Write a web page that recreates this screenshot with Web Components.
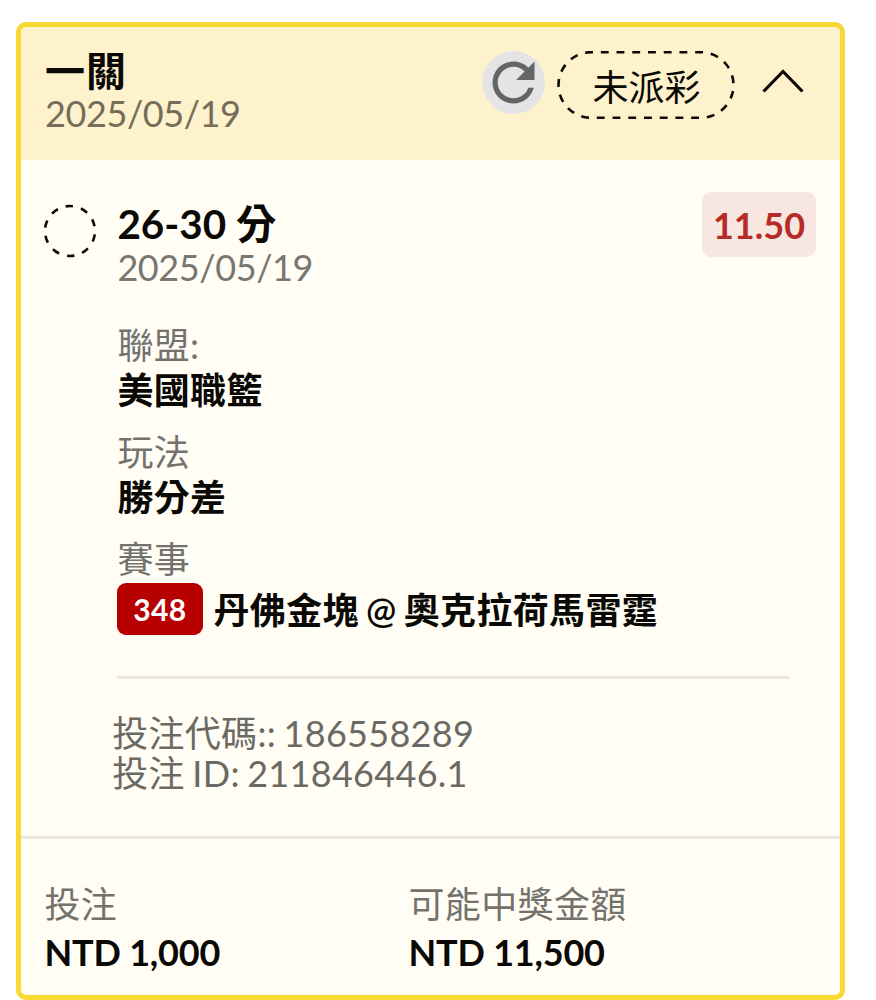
<!DOCTYPE html>
<html lang="zh-Hant">
<head>
<meta charset="utf-8">
<title>一關</title>
<style>
html,body{margin:0;background:#fff}
body{width:876px;height:1000px;overflow:hidden;font:400 36px/44px Lato,"Noto Sans CJK TC",sans-serif;color:#0a0906}
.at{font-weight:600}
</style>
</head>
<body>
<bet-card>
  <bet-header slot="header" heading="一關" date="2025/05/19">
    <refresh-button></refresh-button>
    <status-pill>未派彩</status-pill>
    <chevron-up></chevron-up>
  </bet-header>
  <bet-leg heading="26-30 分" date="2025/05/19">
    <odds-badge slot="odds">11.50</odds-badge>
    <info-pair label="聯盟:">美國職籃</info-pair>
    <info-pair label="玩法">勝分差</info-pair>
    <info-pair label="賽事"><match-row number="348">丹佛金塊 <span class="at">@</span> 奧克拉荷馬雷霆</match-row></info-pair>
    <div slot="codes">投注代碼:: 186558289<br>投注 ID: 211846446.1</div>
  </bet-leg>
  <bet-totals slot="footer">
    <info-pair label="投注">NTD 1,000</info-pair>
    <info-pair label="可能中獎金額">NTD 11,500</info-pair>
  </bet-totals>
</bet-card>
<script>
const define = (name, render) => customElements.define(name, class extends HTMLElement {
  connectedCallback() {
    if (this.shadowRoot) return;
    this.attachShadow({ mode: 'open' }).innerHTML = render(this);
  }
});

define('bet-card', () => `
<style>
:host{display:flex;flex-direction:column;box-sizing:border-box;width:829px;height:978px;margin:22px 0 0 16px;border:5.5px solid #fad834;border-radius:10px;background:#fffdf4;overflow:hidden}
</style>
<slot name="header"></slot><slot></slot><slot name="footer"></slot>`);

define('bet-header', el => `
<style>
:host{display:flex;box-sizing:border-box;height:133px;padding:21px 35px 0 24px;background:#fef2cc}
.text{flex:1}
h1{margin:0;font-size:40px;line-height:46px;font-weight:700;letter-spacing:1px}
.date{line-height:39px;color:#756d59;letter-spacing:-.4px}
.tools{display:flex;align-items:flex-start}
</style>
<div class="text"><h1>${el.getAttribute('heading')}</h1><div class="date">${el.getAttribute('date')}</div></div>
<div class="tools"><slot></slot></div>`);

define('refresh-button', () => `
<style>
:host{display:block;width:63px;height:63px;margin:3px 12px 0 0;border-radius:50%;background:#e4e4e6}
svg{display:block}
</style>
<svg width="63" height="63" viewBox="0 0 24 24"><path fill="#646567" d="M17.65 6.35C16.2 4.9 14.21 4 12 4c-4.42 0-7.99 3.58-7.99 8s3.57 8 7.99 8c3.73 0 6.84-2.55 7.73-6h-2.08c-.82 2.33-3.04 4-5.65 4-3.31 0-6-2.69-6-6s2.69-6 6-6c1.66 0 3.14.69 4.22 1.78L13 11h7V4l-2.35 2.35z"/></svg>`);

define('status-pill', () => `
<style>
:host{display:grid;width:178px;height:68px;margin:3px 27px 0 0}
svg,span{grid-area:1/1}
span{text-align:center;line-height:73px;padding-left:1px}
</style>
<svg width="178" height="68"><rect x="1.5" y="1.2" width="175" height="65.6" rx="32.8" fill="none" stroke="#0a0906" stroke-width="2.6" pathLength="432" stroke-dasharray="8 8" stroke-dashoffset="-9.7"/></svg>
<span><slot></slot></span>`);

define('chevron-up', () => `
<style>:host{display:block;margin-top:21px}svg{display:block}</style>
<svg width="43" height="26"><path d="M1.5 22.5 21 2.5 40.5 22.5" fill="none" stroke="#0a0906" stroke-width="3.2"/></svg>`);

define('bet-leg', el => `
<style>
:host{display:grid;grid-template-columns:96.4px 1fr;height:679px;box-sizing:border-box;padding-top:31px;border-bottom:3px solid #ebe7e1}
.ring{display:block;margin:13px 0 0 22px}
.head{display:flex;justify-content:space-between;padding:11px 24px 0 0}
h2{margin:0;font-size:40.4px;line-height:43px;font-weight:700}
.date{line-height:44px;color:#787671;letter-spacing:-.4px}
.pairs{display:flex;flex-direction:column;gap:19px;margin-top:34px;letter-spacing:.35px}
.codes{margin:37px 50px 0 0;border-top:3px solid #ebe7e1;padding-top:35px;line-height:39.5px;color:#6b6963;letter-spacing:.3px;word-spacing:-2px}
.codes slot{display:block;margin-left:-5.2px}
</style>
<svg class="ring" width="54" height="54"><circle cx="27" cy="27" r="25" fill="none" stroke="#0a0906" stroke-width="2.6" pathLength="160" stroke-dasharray="7.5 8.5" transform="rotate(-100 27 27)"/></svg>
<div>
  <div class="head"><div><h2>${el.getAttribute('heading')}</h2><div class="date">${el.getAttribute('date')}</div></div><slot name="odds"></slot></div>
  <div class="pairs"><slot></slot></div>
  <div class="codes"><slot name="codes"></slot></div>
</div>`);

define('odds-badge', () => `
<style>:host{display:block;width:114px;height:65px;line-height:67px;margin-top:-10px;border-radius:9px;background:#f7e7e0;color:#b62b25;font-weight:700;text-align:center}</style>
<slot></slot>`);

define('info-pair', el => `
<style>
:host{display:block}
.label{line-height:var(--label-line,44px);color:#74726d;letter-spacing:.35px}
.value{line-height:var(--value-line,46px);margin-bottom:var(--value-gap,-2px);font-weight:700}
:host(:last-of-type) .value{margin-bottom:0}
</style>
<div class="label">${el.getAttribute('label')}</div><div class="value"><slot></slot></div>`);

define('match-row', el => `
<style>
:host{display:flex;align-items:center;gap:10.5px;line-height:58px;white-space:nowrap;word-spacing:-2px;letter-spacing:.35px}
.no{width:86px;height:52px;line-height:52px;margin:-2px 0 0 -.4px;border-radius:9px;background:#b70000;color:#fff;font-size:30px;text-align:center}
</style>
<span class="no">${el.getAttribute('number')}</span><span><slot></slot></span>`);

define('bet-totals', () => `
<style>
:host{display:grid;grid-template-columns:364px 1fr;padding:41px 23.5px 0;--label-line:48px;--value-line:49px;--value-gap:0;letter-spacing:-.2px}
</style>
<slot></slot>`);
</script>
</body>
</html>
